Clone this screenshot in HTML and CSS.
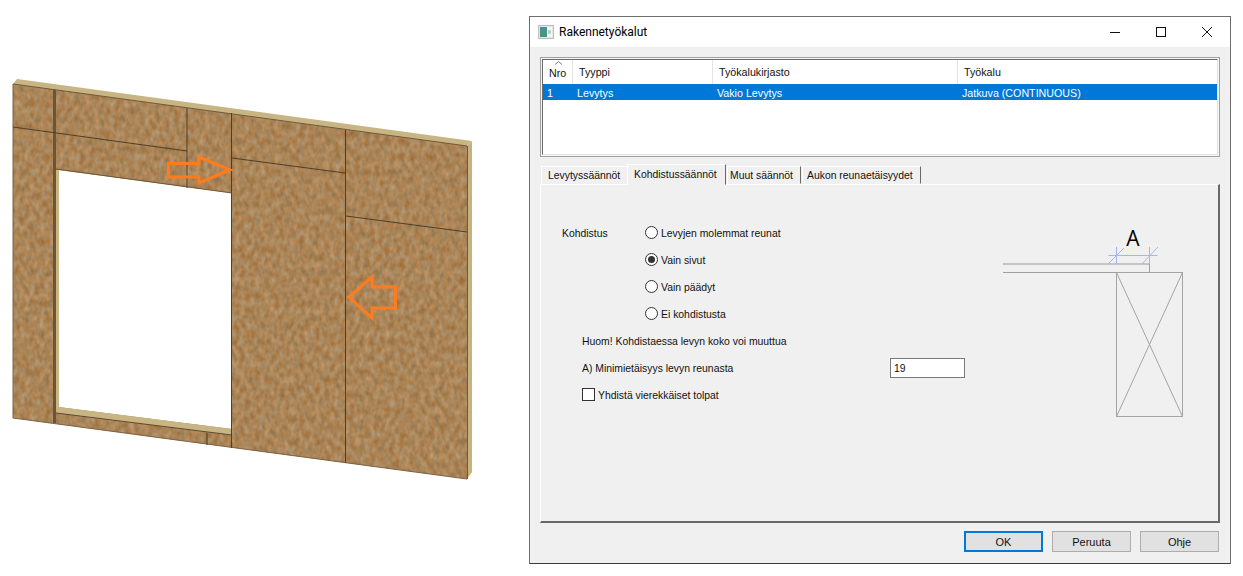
FILE: index.html
```html
<!DOCTYPE html>
<html lang="en">
<head>
  <meta charset="UTF-8">
  <title>Rakennetyökalut</title>
  <link rel="stylesheet" href="styles.css">
</head>
<body>
  <div class="page">
    <!-- wall model -->
    <svg class="wall" width="529" height="576" viewBox="0 0 529 576">
      <defs>
        <filter id="osb" x="0" y="0" width="100%" height="100%" color-interpolation-filters="sRGB">
          <feTurbulence type="fractalNoise" baseFrequency="0.2 0.13" numOctaves="2" seed="7"/>
          <feColorMatrix type="matrix" values="0.2 0.1 0 0 0.517  0.24 -0.04 0 0 0.42  0.28 -0.14 0 0 0.275  0 0 0 0 1"/>
        </filter>
        <clipPath id="sheet">
          <path d="M13 84 L467 146 V479 L13 418 Z M58 170 V407 L232 429 V193 Z" clip-rule="evenodd"/>
        </clipPath>
        <linearGradient id="icon-fill" x1="0" y1="0" x2="0" y2="1">
          <stop offset="0" stop-color="#4f8f9c"/>
          <stop offset="1" stop-color="#3f9a78"/>
        </linearGradient>
      </defs>
      <polygon points="13,84 17,79 472,141 467,146" fill="#c9b583"/>
      <polygon points="467,146 472,141 472,472 467,479" fill="#c4b27f"/>
      <line x1="467.500" y1="146" x2="467.500" y2="479" stroke="#6a5d3e" stroke-width="1"/>
      <rect x="13" y="79" width="455" height="401" fill="#a9814f" filter="url(#osb)" clip-path="url(#sheet)"/>
      <line x1="13" y1="84" x2="467" y2="146" stroke="#6d5638" stroke-width="1"/>
      <line x1="13" y1="418" x2="467" y2="479" stroke="#7a6243" stroke-width="1"/>
      <line x1="13" y1="84" x2="13" y2="418" stroke="#7a6243" stroke-width="1"/>
      <!-- opening -->
      <polygon points="53,89 56,90 56,423 53,423" fill="#6b5535"/>
      <polygon points="56,170 59,170 59,407 56,410" fill="#c9b583"/>
      <polygon points="56,410 59,407 232,429 232,435 56,413" fill="#c9b583"/>
      <line x1="56" y1="413" x2="232" y2="435" stroke="#5f4a30" stroke-width="1"/>
      <line x1="56" y1="169" x2="232" y2="193" stroke="#6d5638" stroke-width="1"/>
      <!-- seams -->
      <path class="seam" d="M13 127 L187 151 M187 108 V188 M231.500 113 V448 M232 158 L345 173 M345.500 130 V463 M346 216 L467 232 M207 433 V445"/>
      <!-- arrows -->
      <polygon class="arrow" points="168.500,163.500 199,163.500 199,157 230,170 199,183 199,177 168.500,177"/>
      <polygon class="arrow" points="349,297 372,277 372,287 395.500,287 395.500,308 372,308 372,318"/>
    </svg>

    <div class="dialog">
      <div class="titlebar">
        <svg class="app-icon" width="16" height="14" viewBox="0 0 16 14">
          <rect x="0.500" y="0.500" width="15" height="13" fill="#e6e6e6" stroke="#bdbdbd"/>
          <rect x="2" y="2" width="7" height="10" fill="url(#icon-fill)"/>
          <rect x="9" y="2" width="1" height="10" fill="#fff"/>
          <rect x="10" y="2" width="4" height="10" fill="#f4f7f4"/>
          <rect x="10" y="5" width="3" height="4" fill="#b7d4c4"/>
        </svg>
        <span class="title">Rakennetyökalut</span>
        <div class="controls">
          <svg width="10" height="10" viewBox="0 0 10 10"><line x1="0" y1="5.500" x2="10" y2="5.500" stroke="#111"/></svg>
          <svg width="10" height="10" viewBox="0 0 10 10"><rect x="0.500" y="0.500" width="9" height="9" fill="none" stroke="#111"/></svg>
          <svg width="10" height="10" viewBox="0 0 10 10"><path d="M0 0 L10 10 M10 0 L0 10" stroke="#111" fill="none"/></svg>
        </div>
      </div>

      <div class="client">
        <div class="list">
          <div class="list-inner">
            <div class="list-head">
              <div class="col-head col-nro">
                <svg class="sort" width="7" height="4" viewBox="0 0 7 4"><path d="M0 3.500 L3.500 0.500 L7 3.500" fill="none" stroke="#7a7a7a"/></svg>
                Nro
              </div>
              <div class="col-head">Tyyppi</div>
              <div class="col-head">Työkalukirjasto</div>
              <div class="col-head">Työkalu</div>
            </div>
            <div class="list-row selected">
              <div>1</div>
              <div>Levytys</div>
              <div>Vakio Levytys</div>
              <div>Jatkuva (CONTINUOUS)</div>
            </div>
          </div>
        </div>

        <div class="tabs">
          <div class="tab tab-first">Levytyssäännöt</div>
          <div class="tab active">Kohdistussäännöt</div>
          <div class="tab tab-muut">Muut säännöt</div>
          <div class="tab tab-aukon">Aukon reunaetäisyydet</div>
        </div>

        <div class="panel">
          <div class="form">
            <div class="align-group">
              <div class="align-label">Kohdistus</div>
              <div class="radios">
                <label class="radio-row"><span class="radio"></span>Levyjen molemmat reunat</label>
                <label class="radio-row"><span class="radio checked"></span>Vain sivut</label>
                <label class="radio-row"><span class="radio"></span>Vain päädyt</label>
                <label class="radio-row"><span class="radio"></span>Ei kohdistusta</label>
              </div>
            </div>
            <div class="form-row">Huom! Kohdistaessa levyn koko voi muuttua</div>
            <div class="form-row">
              <span class="field-label">A) Minimietäisyys levyn reunasta</span>
              <span class="field">19</span>
            </div>
            <label class="form-row"><span class="check"></span>Yhdistä vierekkäiset tolpat</label>
          </div>

          <svg class="diagram" width="190" height="200" viewBox="1000 220 190 200">
            <text x="1133" y="246" class="dim-letter" text-anchor="middle">A</text>
            <path d="M1003 264 H1149" stroke="#c4c4c4" stroke-width="2" fill="none"/>
            <path d="M1003 272.500 H1183 M1149.500 264 V272" stroke="#a0a0a0" fill="none"/>
            <rect x="1116.500" y="272.500" width="66" height="144" fill="none" stroke="#a4a4a4"/>
            <path d="M1116.500 272.500 L1182.500 416.500 M1182.500 272.500 L1116.500 416.500" stroke="#a4a4a4" fill="none"/>
            <path d="M1108.500 255.500 H1157.500 M1116.500 247 V264 M1149.500 247 V264 M1108 264 L1124 248 M1142 264 L1158 247" stroke="#a5b5f4" fill="none"/>
          </svg>
        </div>

        <div class="buttons">
          <button class="btn btn-default">OK</button>
          <button class="btn">Peruuta</button>
          <button class="btn">Ohje</button>
        </div>
      </div>
    </div>
  </div>
</body>
</html>
```
FILE: styles.css
```css
body {
  margin: 0;
  background-color: #fff;
  font-family: "Liberation Sans", Arial, sans-serif;
  font-size: 10.4px;
  color: #111;
}

.page {
  display: flex;
  width: 1243px;
  height: 576px;
  overflow: hidden;
}

.wall {
  display: block;
  flex: none;
}

.seam {
  fill: none;
  stroke: #4f3e28;
  stroke-width: 1;
}

.arrow {
  fill: none;
  stroke: #ff7c1e;
  stroke-width: 3;
}

.dialog {
  flex: none;
  display: flex;
  flex-direction: column;
  box-sizing: border-box;
  width: 702px;
  height: 548px;
  margin-top: 16px;
  background-color: #f0f0f0;
  border: 1px solid #6e6e6e;
  border-bottom-color: #3c3c3c;
}

.titlebar {
  display: flex;
  align-items: center;
  height: 30px;
  background-color: #fff;
  padding-left: 8px;
}

.title {
  margin-left: 5px;
  font-family: Roboto, sans-serif;
  font-size: 12px;
  color: #000;
}

.controls {
  display: flex;
  gap: 36px;
  margin-left: auto;
  margin-right: 18px;
}

.controls svg {
  display: block;
}

.client {
  display: flex;
  flex-direction: column;
  flex: 1;
  padding: 10px 10px 0;
}

.list {
  box-sizing: border-box;
  height: 100px;
  border: 1px solid #a0a0a0;
  padding: 1px;
  background-color: #f7f7f7;
  font-size: 10.7px;
}

.list-inner {
  box-sizing: border-box;
  height: 100%;
  background-color: #fff;
  border: 1px solid;
  border-color: #696969 #e3e3e3 #e3e3e3 #696969;
}

.list-head,
.list-row {
  display: grid;
  grid-template-columns: 30px 140px 245px 1fr;
}

.list-head {
  height: 24px;
}

.col-head {
  position: relative;
  padding: 5px 0 0 6px;
  line-height: 15px;
  border-right: 1px solid #e5e5e5;
}

.col-head:last-child {
  border-right: none;
}

.col-nro {
  padding-top: 6px;
}

.sort {
  position: absolute;
  top: 1px;
  left: 12px;
}

.list-row {
  height: 16px;
  line-height: 18px;
}

.list-row div {
  height: 16px;
  padding-left: 4px;
}

.selected {
  background-color: #0078d7;
  color: #fff;
}

.tabs {
  display: flex;
  align-items: flex-end;
  height: 20px;
  margin-top: 7px;
  padding-left: 1px;
}

.tab {
  box-sizing: border-box;
  height: 18px;
  line-height: 17px;
  padding-left: 6px;
  border: 1px solid;
  border-color: #fff #696969 transparent #fff;
  background-color: #f0f0f0;
}

.tab-first {
  width: 86px;
  border-right: none;
}

.active {
  position: relative;
  width: 99px;
  height: 21px;
  margin-bottom: -1px;
  padding-left: 6px;
  line-height: 20px;
  z-index: 1;
}

.tab-muut {
  width: 74px;
  margin-left: 1px;
  padding-left: 2px;
}

.tab-aukon {
  width: 119px;
  margin-left: 1px;
  padding-left: 4px;
}

.panel {
  box-sizing: border-box;
  display: flex;
  height: 339px;
  border: 1px solid;
  border-color: #fff #696969 #696969 #fff;
  border-width: 1px 2px 2px 1px;
}

.form {
  flex: none;
  width: 404px;
  padding: 34px 0 0 21px;
}

.align-group {
  display: flex;
}

.align-label {
  width: 83px;
  line-height: 29px;
}

.radio-row,
.form-row {
  box-sizing: border-box;
  display: flex;
  align-items: center;
  height: 27px;
  padding-top: 2px;
}

.radio {
  box-sizing: border-box;
  display: flex;
  align-items: center;
  justify-content: center;
  width: 13px;
  height: 13px;
  margin-top: -2px;
  margin-right: 3px;
  border: 1px solid #333;
  border-radius: 50%;
  background-color: #fff;
}

.checked::after {
  content: "";
  width: 7px;
  height: 7px;
  border-radius: 50%;
  background-color: #333;
}

.form-row {
  margin-left: 20px;
}

.field-label {
  width: 308px;
}

.field {
  box-sizing: border-box;
  width: 75px;
  height: 20px;
  margin-top: -2px;
  padding-left: 3px;
  line-height: 19px;
  background-color: #fff;
  border: 1px solid #7a7a7a;
}

.check {
  box-sizing: border-box;
  width: 13px;
  height: 13px;
  margin-top: -2px;
  margin-right: 3px;
  background-color: #fff;
  border: 1px solid #333;
}

.diagram {
  display: block;
  flex: none;
  margin-top: 35px;
  margin-left: auto;
  margin-right: 28px;
}

.dim-letter {
  font-family: "Open Sans", sans-serif;
  font-size: 21px;
  fill: #000;
}

.buttons {
  display: flex;
  justify-content: flex-end;
  gap: 9px;
  margin-top: 8px;
  margin-right: 1px;
}

.btn {
  box-sizing: border-box;
  width: 79px;
  height: 21px;
  padding: 0;
  font-family: "Liberation Sans", Arial, sans-serif;
  font-size: 11px;
  color: #111;
  background-color: #e1e1e1;
  border: 1px solid #adadad;
}

.btn-default {
  border: 2px solid #0078d7;
}
```
